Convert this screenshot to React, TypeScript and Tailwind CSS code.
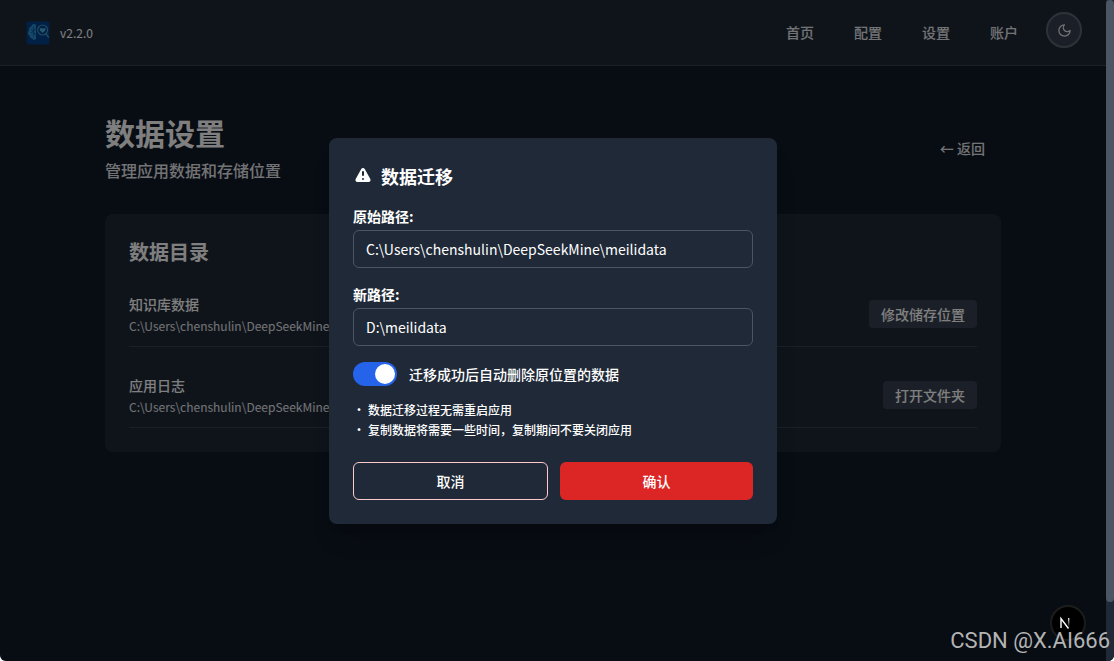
import { useState } from "react";
import type { ReactNode } from "react";
import { HiExclamation } from "react-icons/hi";

const navItems = ["首页", "配置", "设置", "账户"];

const directories = [
  {
    title: "知识库数据",
    path: "C:\\Users\\chenshulin\\DeepSeekMine\\meilidata",
    action: "修改储存位置",
  },
  {
    title: "应用日志",
    path: "C:\\Users\\chenshulin\\DeepSeekMine\\logs",
    action: "打开文件夹",
  },
];

function Logo() {
  return (
    <svg width="24" height="24" viewBox="0 0 24 24" fill="none" aria-hidden="true">
      <rect x="0.5" y="0.5" width="23" height="23" rx="3" fill="#00408c" />
      <path
        d="M8.5 3C6.5 3 5.6 4.3 5.2 5.6C3.4 6.2 2.6 7.8 3 9.4C1.4 10.8 1.6 13.4 3.4 14.4C3.6 16.4 5 17.4 6.2 17.4C7 19 9.6 19.2 10 17.4V4.6C10 3.6 9.4 3 8.5 3Z"
        fill="#2f8fcc"
      />
      <path
        d="M7.6 5.6V15.6M5 8.4L7.6 10L5 12M10 7.6L7.6 9.6M10 13.4L7.6 12"
        stroke="#00509c"
        strokeWidth="0.8"
      />
      <circle cx="16.6" cy="9" r="5" stroke="#3f94c4" strokeWidth="1.2" />
      <path d="M20 12.6L22.4 16" stroke="#3f94c4" strokeWidth="1.4" strokeLinecap="round" />
      <path d="M16.6 12L13.8 9.2V7.2H16L16.6 7.8L17.2 7.2H19.4V9.2Z" fill="#4fb4dc" />
    </svg>
  );
}

function Header() {
  return (
    <header className="flex h-[66px] items-center justify-between border-b border-[#374151] bg-[#1f2937] pr-[88px] pl-[26px]">
      <div className="flex items-center gap-[10px]">
        <Logo />
        <span className="text-xs">v2.2.0</span>
      </div>
      <nav className="flex gap-10 pb-0.5 text-sm font-medium text-[#e5e7eb]">
        {navItems.map((item) => (
          <a key={item} href="#">
            {item}
          </a>
        ))}
      </nav>
    </header>
  );
}

interface FieldProps {
  id: string;
  label: string;
  value: string;
}

function PathField({ id, label, value }: FieldProps) {
  return (
    <div className="mt-4">
      <label htmlFor={id} className="block text-sm font-bold">
        {label}
      </label>
      <input
        id={id}
        defaultValue={value}
        className="mt-1 block h-[38px] w-full rounded-md border border-[#4b5563] bg-transparent px-3 text-sm outline-none"
      />
    </div>
  );
}

function Note({ children }: { children: ReactNode }) {
  return (
    <li className="flex">
      <span className="w-[15px]">•</span>
      {children}
    </li>
  );
}

function MigrateDialog() {
  const [removeOld, setRemoveOld] = useState(true);

  return (
    <div
      role="dialog"
      aria-labelledby="migrate-title"
      className="w-full max-w-md rounded-lg bg-[#1f2937] p-6 shadow-xl"
    >
      <h3 id="migrate-title" className="flex h-7 items-center text-lg font-bold">
        <HiExclamation className="mr-2 h-5 w-5" />
        数据迁移
      </h3>
      <PathField id="source" label="原始路径:" value={"C:\\Users\\chenshulin\\DeepSeekMine\\meilidata"} />
      <PathField id="target" label="新路径:" value={"D:\\meilidata"} />
      <label className="mt-4 flex h-6 items-center gap-3 text-sm font-medium">
        <input
          type="checkbox"
          role="switch"
          checked={removeOld}
          onChange={(e) => setRemoveOld(e.target.checked)}
          className="flex h-6 w-11 appearance-none items-center rounded-full bg-[#4b5563] px-[2px] before:h-5 before:w-5 before:rounded-full before:bg-white checked:justify-end checked:bg-[#2563eb]"
        />
        迁移成功后自动删除原位置的数据
      </label>
      <ul className="mt-4 space-y-1 text-xs font-medium">
        <Note>数据迁移过程无需重启应用</Note>
        <Note>复制数据将需要一些时间，复制期间不要关闭应用</Note>
      </ul>
      <div className="mt-6 flex gap-3 text-sm font-medium">
        <button className="flex-1 rounded-md border border-[#fecaca] px-4 py-2">取消</button>
        <button className="flex-1 rounded-md bg-[#dc2626] px-4 py-2">确认</button>
      </div>
    </div>
  );
}

export default function App() {
  return (
    <div className="relative flex h-screen overflow-hidden rounded-b-md bg-[#111827] font-['Noto_Sans_CJK_SC',sans-serif] text-white">
      <div className="min-w-0 flex-1">
        <Header />
        <main className="mx-auto max-w-4xl pt-12">
          <div className="flex items-center justify-between">
            <div>
              <h1 className="text-3xl leading-9 font-bold">数据设置</h1>
              <p className="mt-2 text-base font-medium text-[#e5e7eb]">管理应用数据和存储位置</p>
            </div>
            <button className="px-4 py-2 text-sm font-medium text-[#e5e7eb]">← 返回</button>
          </div>
          <section className="mt-8 space-y-4 rounded-lg bg-[#1f2937] p-6">
            <h2 className="text-xl font-bold">数据目录</h2>
            {directories.map((dir) => (
              <div
                key={dir.title}
                className="flex items-center justify-between border-b border-[#374151] py-3"
              >
                <div>
                  <h3 className="text-sm font-medium">{dir.title}</h3>
                  <p className="mt-1 text-xs text-[#e5e7eb]">{dir.path}</p>
                </div>
                <button className="rounded bg-[#374151] px-3 py-1 text-sm font-medium">
                  {dir.action}
                </button>
              </div>
            ))}
          </section>
        </main>
      </div>

      {/* Scrollbar */}
      <div className="z-20 w-2 bg-[#1f2937]">
        <div className="h-[91vh] rounded-full bg-[#4b5563]" />
      </div>

      {/* Theme toggle */}
      <button
        aria-label="Toggle theme"
        className="absolute top-3 right-8 flex h-9 w-9 items-center justify-center rounded-full border-2 border-[#5b6472] bg-[#374151]"
      >
        <svg width="15" height="15" viewBox="0 0 24 24" fill="none" stroke="#e5e7eb" strokeWidth="2" strokeLinejoin="round" strokeLinecap="round">
          <path d="M12 3a6 6 0 0 0 9 9 9 9 0 1 1-9-9Z" />
        </svg>
      </button>

      {/* Backdrop */}
      <div className="absolute inset-0 z-10 flex items-center justify-center bg-black/50 pr-2">
        <MigrateDialog />
      </div>

      {/* Dev tools badge */}
      <div className="absolute right-7 bottom-5 z-20 flex h-9 w-9 items-center justify-center rounded-full border-2 border-[#1c1c1c] bg-black">
        <svg width="20" height="20" viewBox="0 0 20 20" fill="none" strokeWidth="1.4">
          <defs>
            <linearGradient id="stem" x1="0" y1="4" x2="0" y2="14" gradientUnits="userSpaceOnUse">
              <stop stopColor="#fff" />
              <stop offset="1" stopColor="#fff" stopOpacity="0" />
            </linearGradient>
          </defs>
          <path d="M3 15V5.5L10.5 15.5" stroke="#fff" />
          <path d="M10.7 5V14" stroke="url(#stem)" />
        </svg>
      </div>
      <span className="absolute right-1 bottom-1 z-30 font-[Roboto,sans-serif] text-[22px] leading-8 text-[#b4b4b4]">
        CSDN @X.AI666
      </span>
    </div>
  );
}
